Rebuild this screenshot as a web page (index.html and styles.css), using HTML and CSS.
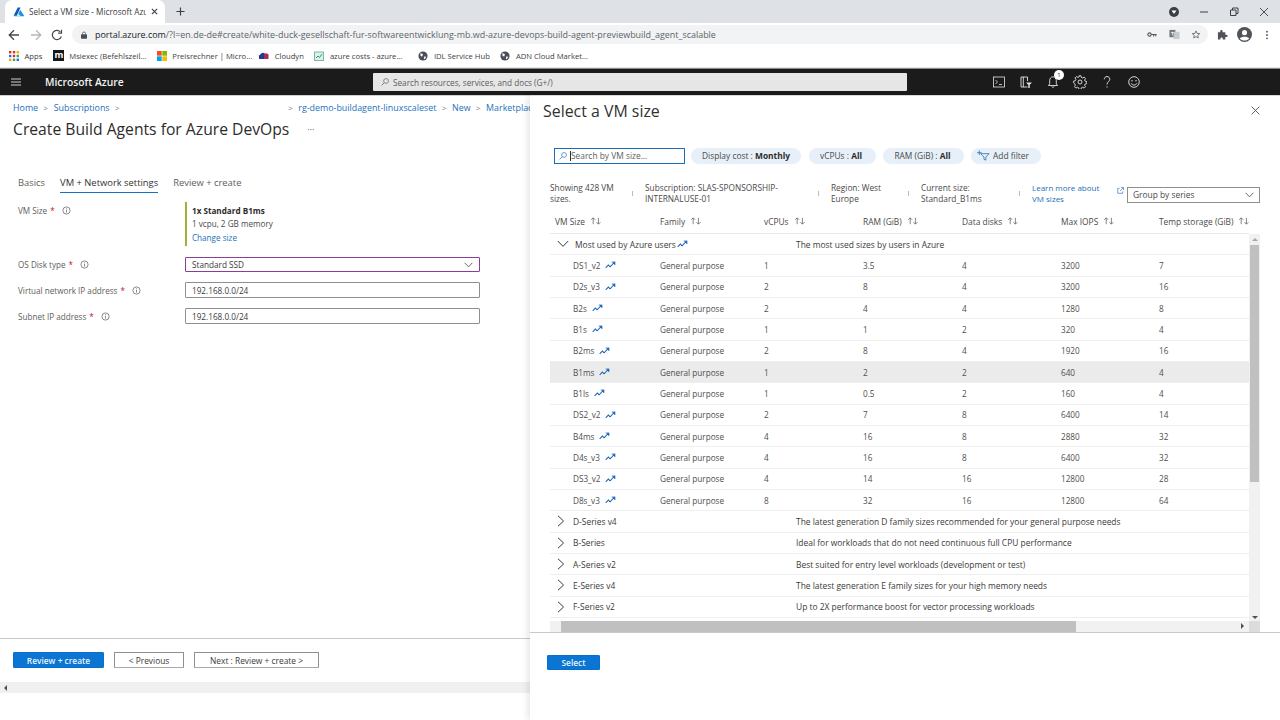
FILE: index.html
```html
<!DOCTYPE html>
<html lang="en">
<head>
<meta charset="utf-8">
<title>Select a VM size - Microsoft Azure</title>
<link rel="stylesheet" href="styles.css">
</head>
<body>
<svg class="defs" xmlns="http://www.w3.org/2000/svg">
  <defs>
    <symbol id="i-sort" viewBox="0 0 14 10"><path d="M3.500 9V1.200M1 3.500l2.500-2.500L6 3.500M10 1v7.800M7.500 6.500 10 9l2.500-2.500" fill="none" stroke="#55585c" stroke-width=".9"/></symbol>
    <symbol id="i-trend" viewBox="0 0 13 9"><path d="M.8 8 4 4.600l2 2L11 1.500M8 1h3.600v3.500" fill="none" stroke="#1d66b8" stroke-width="1.200"/></symbol>
    <symbol id="i-right" viewBox="0 0 8 12"><path d="M1 .8 6.600 6 1 11.200" fill="none" stroke="#3b3a39" stroke-width="1"/></symbol>
    <symbol id="i-down" viewBox="0 0 12 8"><path d="M.8 1 6 6.400 11.200 1" fill="none" stroke="#3b3a39" stroke-width="1"/></symbol>
    <symbol id="i-info" viewBox="0 0 10 10"><circle cx="5" cy="5" r="4" fill="none" stroke="#605e5c" stroke-width=".8"/><path d="M5 4.300v3M5 2.600v1" stroke="#605e5c" stroke-width=".8"/></symbol>
    <symbol id="i-globe" viewBox="0 0 12 12"><circle cx="6" cy="6" r="5.500" fill="#4a4f55"/><path d="M3 2.500 6 4 5 6.500 3 6zM7.500 6.500l2.500.5L8 10l-1-1z" fill="#fff"/></symbol>
  </defs>
</svg>

<div class="tabstrip">
  <div class="tab">
    <svg class="tab-logo" viewBox="0 0 14 12"><path d="M5.500 .5 .5 10.500h3.800L8.800 .5z" fill="#0b5cab"/><path d="M8.400 3.300 6 8.300l3 2.200H1.500l-.5.500h12.500z" fill="#1f8fe0"/></svg>
    <span class="tab-title">Select a VM size - Microsoft Azure</span>
    <svg class="tab-close" viewBox="0 0 8 8"><path d="M1 1l6 6M7 1 1 7" stroke="#3c4043" stroke-width="1.300"/></svg>
  </div>
  <svg class="new-tab" viewBox="0 0 10 10"><path d="M5 .5v9M.5 5h9" stroke="#3c4043" stroke-width="1.300"/></svg>
  <div class="spring"></div>
  <svg class="ext-badge" viewBox="0 0 10 10"><circle cx="5" cy="5" r="5" fill="#3c4043"/><path d="M2.500 3.500h5L5 7z" fill="#fff"/></svg>
  <svg class="win-btn" viewBox="0 0 10 10"><path d="M1 5h8" stroke="#3c4043"/></svg>
  <svg class="win-btn" viewBox="0 0 10 10"><path d="M1.500 3h5.500v5.500H1.500zM3.500 3V1H9v5.500H7" fill="none" stroke="#3c4043"/></svg>
  <svg class="win-btn last" viewBox="0 0 10 10"><path d="M1 1l8 8M9 1 1 9" stroke="#3c4043" stroke-width=".9"/></svg>
</div>

<div class="toolbar">
  <svg class="nav-icon" viewBox="0 0 12 12"><path d="M11 6H1.500M6 1.200 1.200 6 6 10.800" fill="none" stroke="#44484c" stroke-width="1.300"/></svg>
  <svg class="nav-icon" viewBox="0 0 12 12"><path d="M1 6h9.500M6 1.200 10.800 6 6 10.800" fill="none" stroke="#b4b7bb" stroke-width="1.300"/></svg>
  <svg class="nav-icon" viewBox="0 0 12 12"><path d="M10.300 7.500A4.600 4.600 0 1 1 9.300 2.800M10.500 .8v3.400H7.100" fill="none" stroke="#44484c" stroke-width="1.200"/></svg>
  <div class="omnibox">
    <svg class="lock" viewBox="0 0 8 10"><path d="M2 4V3a2 2 0 0 1 4 0v1" fill="none" stroke="#4a4d51"/><rect y="4" width="8" height="6" rx="1" fill="#4a4d51"/></svg>
    <span class="url"><span class="url-host">portal.azure.com</span>/?l=en.de-de#create/white-duck-gesellschaft-fur-softwareentwicklung-mb.wd-azure-devops-build-agent-previewbuild_agent_scalable</span>
    <span class="spring"></span>
    <svg class="omni-icon" viewBox="0 0 12 8"><circle cx="3" cy="4" r="2" fill="none" stroke="#555" stroke-width="1.300"/><path d="M5 4h6.500M8 4v2.500M10.500 4v2" stroke="#555" stroke-width="1.300"/></svg>
    <svg class="omni-icon" viewBox="0 0 12 12"><rect x=".5" y="1" width="6.500" height="8" fill="#70757a"/><rect x="5" y="3" width="6.500" height="8" fill="#c6cacf"/><path d="M2 4h3.500M3.700 3v4" stroke="#fff" stroke-width=".8"/></svg>
    <svg class="omni-icon" viewBox="0 0 12 12"><path d="M6 1.200 7.400 4.500l3.600.3-2.700 2.300.8 3.500L6 8.800 2.900 10.600l.8-3.500L1 4.800l3.600-.3z" fill="none" stroke="#555" stroke-width="1"/></svg>
  </div>
  <svg class="bar-icon puzzle" viewBox="0 0 12 12"><path d="M1 3.500h2.500V2.300a1.300 1.300 0 0 1 2.600 0v1.200h3v2.700h1.100a1.300 1.300 0 0 1 0 2.600H9.100v2.700H6.300v-1a1.300 1.300 0 0 0-2.600 0v1H1z" fill="#50545a"/></svg>
  <svg class="bar-icon avatar" viewBox="0 0 16 16"><circle cx="8" cy="8" r="8" fill="#50545a"/><circle cx="8" cy="6" r="2.700" fill="#fff"/><path d="M3 12.300c1.500-2.500 8.500-2.500 10 0-1.200 1.600-3 2.200-5 2.200s-3.800-.6-5-2.200z" fill="#fff"/></svg>
  <svg class="bar-icon dots" viewBox="0 0 4 12"><circle cx="2" cy="2" r="1.100" fill="#50545a"/><circle cx="2" cy="6" r="1.100" fill="#50545a"/><circle cx="2" cy="10" r="1.100" fill="#50545a"/></svg>
</div>

<div class="bookmarks">
  <a class="bm bm-apps"><svg class="bm-icon" viewBox="0 0 10 10"><g fill="#d93025"><rect width="2.400" height="2.400"/><rect x="3.800" width="2.400" height="2.400"/></g><rect x="7.600" fill="#f9ab00" width="2.400" height="2.400"/><rect y="3.800" fill="#1a73e8" width="2.400" height="2.400"/><rect x="3.800" y="3.800" fill="#d93025" width="2.400" height="2.400"/><rect x="7.600" y="3.800" fill="#34a853" width="2.400" height="2.400"/><rect y="7.600" fill="#f9ab00" width="2.400" height="2.400"/><rect x="3.800" y="7.600" fill="#34a853" width="2.400" height="2.400"/><rect x="7.600" y="7.600" fill="#1a73e8" width="2.400" height="2.400"/></svg>Apps</a>
  <a class="bm bm-m"><span class="m-icon">m</span>Msiexec (Befehlszeil...</a>
  <a class="bm bm-p"><svg class="bm-icon" viewBox="0 0 10 10"><rect width="4.700" height="4.700" fill="#f25022"/><rect x="5.300" width="4.700" height="4.700" fill="#7fba00"/><rect y="5.300" width="4.700" height="4.700" fill="#00a4ef"/><rect x="5.300" y="5.300" width="4.700" height="4.700" fill="#ffb900"/></svg>Preisrechner | Micro...</a>
  <a class="bm bm-c"><svg class="bm-icon" viewBox="0 0 10 10"><path d="M1 8a2 2 0 0 1 0-4 3 3 0 0 1 5-1.300V8z" fill="#243a8f"/><path d="M5 8V4a2.300 2.300 0 0 1 4.500 1.500V8z" fill="#b02a5b"/></svg>Cloudyn</a>
  <a class="bm bm-a"><svg class="bm-icon" viewBox="0 0 10 10"><rect x=".5" y="1" width="9" height="8.500" fill="#dff0ea" stroke="#7fb8a6"/><path d="M2 7 4 5l1.500 1.500L8 3" fill="none" stroke="#2d9b76"/></svg>azure costs - azure...</a>
  <a class="bm bm-i"><svg class="bm-icon" viewBox="0 0 12 12"><use href="#i-globe"/></svg>IDL Service Hub</a>
  <a class="bm"><svg class="bm-icon" viewBox="0 0 12 12"><use href="#i-globe"/></svg>ADN Cloud Market...</a>
</div>

<header class="topbar">
  <svg class="burger" viewBox="0 0 10 8"><path d="M0 1h10M0 4h10M0 7h10" stroke="#d0d0d0"/></svg>
  <span class="brand">Microsoft Azure</span>
  <div class="global-search">
    <svg class="gs-icon" viewBox="0 0 10 10"><circle cx="6.300" cy="3.700" r="3" fill="none" stroke="#555" stroke-width=".8"/><path d="M4 6 .8 9.200" stroke="#555" stroke-width=".9"/></svg>
    <span>Search resources, services, and docs (G+/)</span>
  </div>
  <div class="spring"></div>
  <div class="top-icons">
    <svg class="top-icon" viewBox="0 0 14 14"><rect x="1.500" y="2" width="11" height="10" fill="none" stroke="#e6e6e6" stroke-width=".8"/><path d="M3.500 5l2 2-2 2M7 9.500h3" fill="none" stroke="#e6e6e6" stroke-width=".8"/></svg>
    <svg class="top-icon" viewBox="0 0 14 14"><path d="M2 2h6.500v4M8.500 12H2V2M4.300 2v10" fill="none" stroke="#e6e6e6" stroke-width=".9"/><path d="M7 7.500h6l-2.300 2.300V13H9.300V9.800z" fill="#e6e6e6"/></svg>
    <span class="bell-wrap">
      <svg class="top-icon" viewBox="0 0 14 14"><path d="M7 1.800c-2.300 0-3.300 1.800-3.300 4v3L2.500 10.500h9L10.300 8.800v-3c0-2.200-1-4-3.300-4zM5.800 11.500a1.300 1.300 0 0 0 2.400 0" fill="none" stroke="#e6e6e6" stroke-width=".9"/></svg>
      <span class="badge">1</span>
    </span>
    <svg class="top-icon" viewBox="0 0 14 14"><circle cx="7" cy="7" r="2" fill="none" stroke="#e6e6e6" stroke-width=".9"/><path d="M6 .8h2l.4 1.700 1.200.5 1.500-.9 1.400 1.400-.9 1.500.5 1.200 1.700.4v2l-1.700.4-.5 1.200.9 1.500-1.400 1.400-1.500-.9-1.200.5-.4 1.700H6l-.4-1.700-1.200-.5-1.500.9-1.400-1.400.9-1.500-.5-1.200L.7 8V6l1.700-.4.500-1.200-.9-1.500 1.400-1.400 1.500.9 1.200-.5z" fill="none" stroke="#e6e6e6" stroke-width=".9"/></svg>
    <svg class="top-icon" viewBox="0 0 14 14"><path d="M4.300 4.300C4.300 2.700 5.500 1.500 7 1.500s2.800 1.100 2.800 2.700c0 2.300-2.800 2.600-2.800 5.300M7 11.300v1.300" fill="none" stroke="#e6e6e6" stroke-width=".9"/></svg>
    <svg class="top-icon" viewBox="0 0 14 14"><circle cx="7" cy="7" r="5.300" fill="none" stroke="#e6e6e6" stroke-width=".9"/><circle cx="5" cy="5.800" r=".7" fill="#e6e6e6"/><circle cx="9" cy="5.800" r=".7" fill="#e6e6e6"/><path d="M4 8.300c1.200 2.300 4.800 2.300 6 0" fill="none" stroke="#e6e6e6" stroke-width=".9"/></svg>
  </div>
</header>

<main class="workspace">
  <section class="blade">
    <nav class="crumbs">
      <a>Home</a><i>&gt;</i><a>Subscriptions</a><i>&gt;</i>
      <i class="crumb-gap">&gt;</i><a>rg-demo-buildagent-linuxscaleset</a><i>&gt;</i><a>New</a><i>&gt;</i><a>Marketplace</a>
    </nav>
    <div class="blade-head">
      <h1>Create Build Agents for Azure DevOps</h1>
      <span class="more">···</span>
    </div>
    <div class="tabs">
      <span class="wiz-tab">Basics</span>
      <span class="wiz-tab active">VM + Network settings</span>
      <span class="wiz-tab">Review + create</span>
    </div>
    <div class="form">
      <div class="form-row vm-row">
        <div class="label">VM Size <b>*</b><svg class="info" viewBox="0 0 10 10"><use href="#i-info"/></svg></div>
        <div class="vm-box">
          <strong>1x Standard B1ms</strong>
          <span>1 vcpu, 2 GB memory</span>
          <a>Change size</a>
        </div>
      </div>
      <div class="form-row">
        <div class="label">OS Disk type <b>*</b><svg class="info" viewBox="0 0 10 10"><use href="#i-info"/></svg></div>
        <div class="field select-field"><span>Standard SSD</span><svg class="caret" viewBox="0 0 12 8"><use href="#i-down"/></svg></div>
      </div>
      <div class="form-row">
        <div class="label">Virtual network IP address <b>*</b><svg class="info" viewBox="0 0 10 10"><use href="#i-info"/></svg></div>
        <div class="field"><span>192.168.0.0/24</span></div>
      </div>
      <div class="form-row">
        <div class="label">Subnet IP address <b>*</b><svg class="info" viewBox="0 0 10 10"><use href="#i-info"/></svg></div>
        <div class="field"><span>192.168.0.0/24</span></div>
      </div>
    </div>
    <div class="blade-foot">
      <button class="btn primary wide">Review + create</button>
      <button class="btn ghost prev">&lt; Previous</button>
      <button class="btn ghost next">Next : Review + create &gt;</button>
    </div>
    <div class="blade-scroll"><span class="arrow-left"></span></div>
  </section>

  <section class="panel">
    <div class="panel-head">
      <h2>Select a VM size</h2>
      <svg class="panel-close" viewBox="0 0 10 10"><path d="M.7.7l8.600 8.600M9.300.7.700 9.300" stroke="#3b3a39" stroke-width=".9"/></svg>
    </div>
    <div class="filters">
      <div class="vm-search">
        <svg class="vs-icon" viewBox="0 0 10 10"><circle cx="6.300" cy="3.700" r="3" fill="none" stroke="#1d66b8" stroke-width=".8"/><path d="M4 6 .8 9.200" stroke="#1d66b8" stroke-width=".9"/></svg>
        <span class="cursor"></span><span>Search by VM size...</span>
      </div>
      <span class="pill pill-cost">Display cost : <b>Monthly</b></span>
      <span class="pill pill-cpu">vCPUs : <b>All</b></span>
      <span class="pill pill-ram">RAM (GiB) : <b>All</b></span>
      <span class="pill pill-add"><svg class="add-icon" viewBox="0 0 14 11"><path d="M2.500 0v5M0 2.500h5" stroke="#1d66b8" stroke-width=".8"/><path d="M4 3.500h9l-3.500 3.700V10.500l-2-1V7.200z" fill="none" stroke="#1d66b8" stroke-width=".8"/></svg>Add filter</span>
    </div>
    <div class="info-row">
      <span class="info-cell c1">Showing 428 VM sizes.</span><i class="sep"></i>
      <span class="info-cell c2">Subscription: SLAS-SPONSORSHIP-INTERNALUSE-01</span><i class="sep"></i>
      <span class="info-cell c3">Region: West Europe</span><i class="sep"></i>
      <span class="info-cell c4">Current size: Standard_B1ms</span><i class="sep"></i>
      <a class="info-cell c5">Learn more about VM sizes</a>
      <svg class="ext" viewBox="0 0 8 8"><path d="M3 1.500H.8v5.700h5.700V5M4.500.6h3v3M7.300.8 3.500 4.500" fill="none" stroke="#1d66b8" stroke-width=".7"/></svg>
      <div class="group-by"><span>Group by series</span><svg class="caret" viewBox="0 0 12 8"><use href="#i-down"/></svg></div>
    </div>

    <div class="grid-head">
      <span>VM Size<svg class="sort" viewBox="0 0 14 10"><use href="#i-sort"/></svg></span>
      <span>Family<svg class="sort" viewBox="0 0 14 10"><use href="#i-sort"/></svg></span>
      <span>vCPUs<svg class="sort" viewBox="0 0 14 10"><use href="#i-sort"/></svg></span>
      <span>RAM (GiB)<svg class="sort" viewBox="0 0 14 10"><use href="#i-sort"/></svg></span>
      <span>Data disks<svg class="sort" viewBox="0 0 14 10"><use href="#i-sort"/></svg></span>
      <span>Max IOPS<svg class="sort" viewBox="0 0 14 10"><use href="#i-sort"/></svg></span>
      <span>Temp storage (GiB)<svg class="sort" viewBox="0 0 14 10"><use href="#i-sort"/></svg></span>
    </div>

    <div class="grid-wrap">
      <div class="grid">
        <div class="group"><span class="g-name"><svg class="g-down" viewBox="0 0 12 8"><use href="#i-down"/></svg>Most used by Azure users<svg class="trend tight" viewBox="0 0 13 9"><use href="#i-trend"/></svg></span><span>The most used sizes by users in Azure</span></div>

        <div class="row"><span>DS1_v2<svg class="trend" viewBox="0 0 13 9"><use href="#i-trend"/></svg></span><span>General purpose</span><span>1</span><span>3.5</span><span>4</span><span>3200</span><span>7</span></div>
        <div class="row"><span>D2s_v3<svg class="trend" viewBox="0 0 13 9"><use href="#i-trend"/></svg></span><span>General purpose</span><span>2</span><span>8</span><span>4</span><span>3200</span><span>16</span></div>
        <div class="row"><span>B2s<svg class="trend" viewBox="0 0 13 9"><use href="#i-trend"/></svg></span><span>General purpose</span><span>2</span><span>4</span><span>4</span><span>1280</span><span>8</span></div>
        <div class="row"><span>B1s<svg class="trend" viewBox="0 0 13 9"><use href="#i-trend"/></svg></span><span>General purpose</span><span>1</span><span>1</span><span>2</span><span>320</span><span>4</span></div>
        <div class="row"><span>B2ms<svg class="trend" viewBox="0 0 13 9"><use href="#i-trend"/></svg></span><span>General purpose</span><span>2</span><span>8</span><span>4</span><span>1920</span><span>16</span></div>
        <div class="row selected"><span>B1ms<svg class="trend" viewBox="0 0 13 9"><use href="#i-trend"/></svg></span><span>General purpose</span><span>1</span><span>2</span><span>2</span><span>640</span><span>4</span></div>
        <div class="row"><span>B1ls<svg class="trend" viewBox="0 0 13 9"><use href="#i-trend"/></svg></span><span>General purpose</span><span>1</span><span>0.5</span><span>2</span><span>160</span><span>4</span></div>
        <div class="row"><span>DS2_v2<svg class="trend" viewBox="0 0 13 9"><use href="#i-trend"/></svg></span><span>General purpose</span><span>2</span><span>7</span><span>8</span><span>6400</span><span>14</span></div>
        <div class="row"><span>B4ms<svg class="trend" viewBox="0 0 13 9"><use href="#i-trend"/></svg></span><span>General purpose</span><span>4</span><span>16</span><span>8</span><span>2880</span><span>32</span></div>
        <div class="row"><span>D4s_v3<svg class="trend" viewBox="0 0 13 9"><use href="#i-trend"/></svg></span><span>General purpose</span><span>4</span><span>16</span><span>8</span><span>6400</span><span>32</span></div>
        <div class="row"><span>DS3_v2<svg class="trend" viewBox="0 0 13 9"><use href="#i-trend"/></svg></span><span>General purpose</span><span>4</span><span>14</span><span>16</span><span>12800</span><span>28</span></div>
        <div class="row"><span>D8s_v3<svg class="trend" viewBox="0 0 13 9"><use href="#i-trend"/></svg></span><span>General purpose</span><span>8</span><span>32</span><span>16</span><span>12800</span><span>64</span></div>

        <div class="group"><span class="g-name"><svg class="g-right" viewBox="0 0 8 12"><use href="#i-right"/></svg>D-Series v4</span><span>The latest generation D family sizes recommended for your general purpose needs</span></div>
        <div class="group"><span class="g-name"><svg class="g-right" viewBox="0 0 8 12"><use href="#i-right"/></svg>B-Series</span><span>Ideal for workloads that do not need continuous full CPU performance</span></div>
        <div class="group"><span class="g-name"><svg class="g-right" viewBox="0 0 8 12"><use href="#i-right"/></svg>A-Series v2</span><span>Best suited for entry level workloads (development or test)</span></div>
        <div class="group"><span class="g-name"><svg class="g-right" viewBox="0 0 8 12"><use href="#i-right"/></svg>E-Series v4</span><span>The latest generation E family sizes for your high memory needs</span></div>
        <div class="group"><span class="g-name"><svg class="g-right" viewBox="0 0 8 12"><use href="#i-right"/></svg>F-Series v2</span><span>Up to 2X performance boost for vector processing workloads</span></div>
        <div class="hscroll"><span class="sb-arrow left"></span><span class="h-thumb"></span><span class="spring"></span><span class="sb-arrow right"></span></div>
      </div>
      <div class="vscroll">
        <span class="sb-arrow up"></span>
        <span class="v-thumb"></span>
        <span class="spring"></span>
        <span class="sb-arrow down"></span>
        <span class="corner"></span>
      </div>
    </div>

    <div class="panel-foot">
      <button class="btn primary select">Select</button>
    </div>
  </section>
</main>
</body>
</html>
```

FILE: styles.css
```css
* { box-sizing: border-box; }
html, body { margin: 0; height: 720px; overflow: hidden; background: #fff; }
body {
  display: flex;
  flex-direction: column;
  width: 1280px;
  font-family: "Open Sans", "Liberation Sans", sans-serif;
  font-size: 8.2px;
  color: #3b3a39;
}
.defs { display: none; }
.spring { flex: 1; }
a { color: #2372ba; text-decoration: none; }

/* browser chrome */
.tabstrip { height: 23px; background: #dee1e6; display: flex; align-items: center; flex: none; }
.tab { width: 160px; height: 23px; margin-left: 5px; background: #fff; border-radius: 7px 7px 0 0; display: flex; align-items: center; padding: 0 7px 0 8px; }
.tab-logo { width: 12px; height: 10px; flex: none; }
.tab-title { width: 117px; margin-left: 4px; overflow: hidden; white-space: nowrap; font-size: 8.2px; color: #3c4043; }
.tab-close { width: 7px; height: 7px; margin-left: 5px; flex: none; }
.new-tab { width: 9px; height: 9px; margin-left: 11px; }
.ext-badge { width: 10px; height: 10px; margin-right: 20px; }
.win-btn { width: 10px; height: 10px; margin-right: 20px; }
.win-btn.last { margin-right: 11px; }

.toolbar { height: 23px; display: flex; align-items: center; padding-left: 8px; flex: none; background: #fff; }
.nav-icon { width: 12px; height: 12px; margin-right: 9.500px; flex: none; }
.omnibox { width: 1136px; margin-left: -.5px; height: 19px; border-radius: 10px; background: #f1f3f4; display: flex; align-items: center; padding: 0 7px 0 9px; }
.lock { width: 6px; height: 8px; flex: none; }
.url { margin-left: 8px; font-size: 8.950px; color: #5f6368; white-space: nowrap; }
.url-host { color: #202124; }
.omni-icon { width: 10px; height: 9px; margin-left: 11.500px; flex: none; }
.omni-icon:nth-of-type(3) { width: 11px; height: 11px; }
.bar-icon { flex: none; }
.puzzle { width: 11px; height: 11px; margin-left: 9px; }
.avatar { width: 15px; height: 15px; margin-left: 9px; }
.dots { width: 4px; height: 10px; margin-left: 13px; }

.bookmarks { height: 22px; display: flex; align-items: center; padding: 0 0 2px 9px; flex: none; background: #fff; border-bottom: 1px solid #e8e8e8; }
.bm { display: flex; align-items: center; color: #3c4043; font-size: 7.650px; white-space: nowrap; margin-right: 10.500px; }
.bm-apps { margin-right: 11px; }
.bm-p { margin-right: 7px; }
.bm-a { margin-right: 16px; }
.bm-icon { width: 10px; height: 10px; margin-right: 5.500px; flex: none; }
.m-icon { width: 11px; height: 11px; margin-right: 5px; background: #16181a; color: #fff; font-size: 9px; line-height: 10px; font-weight: 700; text-align: center; }

/* portal header */
.topbar { height: 27px; flex: none; background: #1b1b1b; border-top: 1px solid #8a8a8a; display: flex; align-items: center; }
.burger { width: 10px; height: 8px; margin-left: 11px; }
.brand { margin-left: 24px; width: 328px; color: #f2f2f2; font-size: 10.300px; font-weight: 600; }
.global-search { width: 534px; height: 18px; background: #e6e6e6; border-radius: 1px; display: flex; align-items: center; padding-left: 8px; color: #5d5d5d; font-size: 8.200px; }
.gs-icon { width: 8px; height: 8px; margin-right: 4px; }
.top-icons { display: flex; align-items: center; gap: 13px; padding-right: 139px; }
.top-icon { width: 14px; height: 14px; flex: none; display: block; }
.bell-wrap { position: relative; display: block; }
.badge { position: absolute; top: -5px; right: -4px; width: 10px; height: 10px; border-radius: 50%; background: #fff; color: #222; font-size: 6px; line-height: 10px; text-align: center; }

/* layout */
.workspace { flex: 1; min-height: 0; display: flex; }

/* left blade */
.blade { width: 530px; flex: none; display: flex; flex-direction: column; padding-bottom: 27px; border-top: 1px solid #d0d0d0; overflow: hidden; }
.crumbs { height: 21px; padding: 2px 0 0 13px; display: flex; align-items: center; white-space: nowrap; font-size: 8.900px; flex: none; }
.crumbs i { font-style: normal; color: #7a7a7a; margin: 0 5.500px; font-size: 8px; }
.crumbs .crumb-gap { margin-left: 163px; }
.blade-head { height: 24px; display: flex; align-items: center; padding-left: 13px; flex: none; }
.blade-head h1 { margin: 0; font-size: 15.700px; font-weight: 500; color: #2d2c2b; }
.more { margin-left: 18px; font-size: 9px; color: #555; }
.tabs { margin-top: 33px; height: 19px; display: flex; padding-left: 18px; gap: 15px; flex: none; border: 0; }
.wiz-tab { font-size: 9.400px; line-height: 14px; color: #605e5c; height: 19px; padding-top: 2px; }
.wiz-tab.active { color: #323130; border-bottom: 1.500px solid #1672c4; }
.form { margin-top: 9px; padding-left: 18px; flex: 1; display: flex; flex-direction: column; gap: 10px; }
.form-row { display: grid; grid-template-columns: 167px 295px; align-items: center; min-height: 15px; }
.vm-row { align-items: start; margin-bottom: 1px; }
.label { color: #605e5c; font-size: 8.150px; display: flex; align-items: center; }
.vm-row .label { padding-top: 3px; }
.label b { color: #c50f1f; font-weight: 400; margin-left: 3px; }
.info { width: 9px; height: 9px; margin-left: 7px; }
.vm-box { border-left: 2px solid #9bb23b; padding-left: 5px; height: 44px; display: flex; flex-direction: column; justify-content: center; gap: 0; font-size: 8.150px; line-height: 13.300px; color: #4a4948; }
.vm-box strong { color: #2d2c2b; font-weight: 700; }
.field { height: 16px; border: 1px solid #8f8f8f; border-radius: 1px; display: flex; align-items: center; justify-content: space-between; padding: 0 6px; font-size: 8.200px; color: #3b3a39; }
.select-field { height: 15px; border-color: #8a3e9c; }
.caret { width: 9px; height: 6px; }
.blade-foot { height: 45px; border-top: 1px solid #c9c9c9; display: flex; align-items: flex-start; padding: 13px 0 0 13px; flex: none; }
.btn { font-family: inherit; font-size: 8.400px; height: 16px; padding: 0; border-radius: 1px; display: block; }
.primary { background: #0a75d3; color: #e8f3fb; border: 1px solid #0a6fc8; font-weight: 600; }
.ghost { background: #fff; color: #3b3a39; border: 1px solid #8f8f8f; border-bottom-color: #a9a9a9; }
.wide { width: 91px; }
.prev { width: 70px; margin-left: 10px; }
.next { width: 125px; margin-left: 10px; }
.blade-scroll { height: 11px; background: #f0f0f0; flex: none; display: flex; align-items: center; padding-left: 4px; margin-top: -1px; }
.arrow-left { width: 0; height: 0; border: 3px solid transparent; border-left-width: 0; border-right: 3px solid #505050; }

/* right panel */
.panel { flex: 1; min-width: 0; display: flex; flex-direction: column; box-shadow: -3px 0 6px rgba(0,0,0,.09); background: #fff; border-top: 1px solid #d9d9d9; padding-left: 20px; position: relative; }
.panel-head { height: 28px; margin-left: -7px; display: flex; align-items: center; justify-content: space-between; padding-right: 20px; flex: none; padding-top: 1px; }
.panel-head h2 { margin: 0; font-size: 15.900px; font-weight: 500; color: #323130; }
.panel-close { width: 9px; height: 9px; }
.filters { margin-top: 23px; height: 17px; display: flex; align-items: center; flex: none; padding-left: 4px; }
.vm-search { width: 131px; height: 16px; border: 1.500px solid #1a6cb3; display: flex; align-items: center; padding-left: 4px; color: #605e5c; font-size: 8.400px; }
.vs-icon { width: 8px; height: 8px; margin-right: 3px; flex: none; }
.cursor { width: 1px; height: 10px; background: #333; flex: none; }
.pill { height: 16px; border-radius: 8px; background: #e7f0f8; display: flex; align-items: center; justify-content: center; white-space: pre; font-size: 8.400px; color: #4a4948; }
.pill b { color: #2d2c2b; font-weight: 700; }
.pill-cost { width: 110px; margin-left: 6px; }
.pill-cpu { width: 67px; margin-left: 8px; padding-right: 3px; }
.pill-ram { width: 81px; margin-left: 7px; padding-right: 2px; }
.pill-add { width: 70px; margin-left: 7px; justify-content: flex-start; padding-left: 6px; }
.add-icon { width: 13px; height: 11px; margin-right: 3px; }
.info-row { margin-top: 15px; height: 28px; display: flex; align-items: center; flex: none; font-size: 8.300px; line-height: 11.300px; color: #4a4948; }
.info-cell { display: block; flex: none; }
.sep { width: 1px; height: 5px; background: #bdbdbd; flex: none; }
.c1 { width: 82px; }
.c2 { width: 150px; margin-left: 12px; margin-right: 23px; }
.c3 { width: 56px; margin-left: 12px; margin-right: 21px; }
.c4 { width: 76px; margin-left: 12px; margin-right: 22px; }
.c5 { width: 73px; margin-left: 12px; margin-right: 8px; color: #2372ba; font-size: 8px; }
.ext { width: 7px; height: 7px; margin-left: 4px; margin-right: 1px; margin-bottom: 5px; flex: none; }
.group-by { width: 133px; height: 16px; border: 1px solid #8f8f8f; margin-left: 2px; margin-bottom: 4px; align-self: flex-end; display: flex; align-items: center; justify-content: space-between; padding: 0 5px; font-size: 8.400px; color: #4a4948; }
.grid-head { height: 27px; width: 699px; display: grid; grid-template-columns: 110px 104px 99px 99px 99px 98px 90px; align-items: center; border-bottom: 1px solid #e9e9e9; font-size: 8.400px; color: #4a4948; flex: none; padding-top: 2px; white-space: nowrap; }
.grid-head span:first-child { padding-left: 5px; }
.sort { width: 12px; height: 8px; margin-left: 5px; }
.grid-wrap { display: flex; flex: none; height: 398px; width: 710px; }
.grid { width: 699px; flex: none; font-size: 8.200px; }
.row, .group { height: 21.330px; border-bottom: 1px solid #efefef; display: grid; align-items: center; white-space: nowrap; }
.row { grid-template-columns: 110px 104px 99px 99px 99px 98px 90px; color: #4f4e4d; }
.row span:first-child { padding-left: 23px; display: flex; align-items: center; }
.selected { background: #ebebeb; }
.group { grid-template-columns: 246px 1fr; color: #3b3a39; font-size: 8.440px; }
.g-name { display: flex; align-items: center; padding-left: 7px; }
.g-down { width: 12px; height: 8px; margin-right: 6px; }
.g-right { width: 8px; height: 12px; margin-right: 8px; }
.trend { width: 11px; height: 8px; margin-left: 5px; }
.trend.tight { margin-left: 1px; }
.hscroll { height: 11px; margin-top: 3px; background: #f1f1f1; display: flex; align-items: stretch; }
.h-thumb { width: 515px; background: #c0c0c0; }
.sb-arrow { flex: none; display: block; }
.sb-arrow.left { width: 11px; }
.sb-arrow.right { width: 0; height: 0; align-self: center; border: 3px solid transparent; border-right: 0; border-left: 3px solid #505050; margin-right: 5px; }
.vscroll { width: 11px; background: #f1f1f1; display: flex; flex-direction: column; align-items: center; }
.sb-arrow.up { width: 0; height: 0; border: 3px solid transparent; border-top: 0; border-bottom: 3px solid #a8a8a8; margin: 4px 0 4px; }
.sb-arrow.down { width: 0; height: 0; border: 3px solid transparent; border-bottom: 0; border-top: 3px solid #505050; margin: 3px 0 2px; }
.v-thumb { width: 9px; height: 237px; background: #c0c0c0; }
.corner { width: 11px; height: 11px; background: #dcdcdc; }
.panel-foot { margin-left: -20px; border-top: 1px solid #c9c9c9; padding: 22px 0 0 17px; flex: 1; }
.select { width: 53px; height: 15px; }
```
